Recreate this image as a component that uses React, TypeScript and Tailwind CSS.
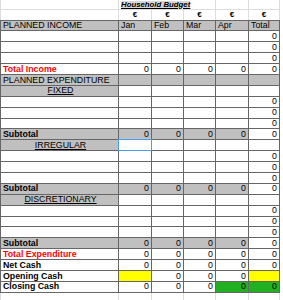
import React from 'react';

type Cell = { v?: string; bg?: string; selected?: boolean };
type Row = {
  label: string;
  labelBg?: string;
  labelClass?: string;
  cells: Cell[];
  cellClass?: string;
};

const GRAY = 'bg-[#c0c0c0]';
const YELLOW = 'bg-[#ffff00]';
const GREEN = 'bg-[#22b022]';
const COLS = 'grid-cols-[117px_32px_31px_31px_32px_30px]';

const blank = (): Row => ({
  label: '',
  cells: [{}, {}, {}, {}, { v: '0' }],
});

const section = (label: string, selected = false): Row => ({
  label,
  labelBg: GRAY,
  labelClass: 'justify-center underline underline-offset-1',
  cells: [{ selected }, {}, {}, {}, {}],
});

const subtotal = (): Row => ({
  label: 'Subtotal',
  labelBg: GRAY,
  labelClass: 'font-bold',
  cells: [
    { v: '0', bg: GRAY },
    { v: '0', bg: GRAY },
    { v: '0', bg: GRAY },
    { v: '0', bg: GRAY },
    { v: '0' },
  ],
});

const allZero = (label: string, labelClass: string): Row => ({
  label,
  labelClass,
  cells: [{ v: '0' }, { v: '0' }, { v: '0' }, { v: '0' }, { v: '0' }],
});

const rows: Row[] = [
  {
    label: 'PLANNED INCOME',
    labelBg: GRAY,
    cells: ['Jan', 'Feb', 'Mar', 'Apr', 'Total'].map((v) => ({ v, bg: GRAY })),
    cellClass: 'justify-start pl-[2px]',
  },
  blank(),
  blank(),
  blank(),
  allZero('Total Income', 'font-bold text-[#ff0000]'),
  {
    label: 'PLANNED EXPENDITURE',
    labelBg: GRAY,
    cells: [{ bg: GRAY }, { bg: GRAY }, { bg: GRAY }, { bg: GRAY }, { bg: GRAY }],
  },
  section('FIXED'),
  blank(),
  blank(),
  blank(),
  subtotal(),
  section('IRREGULAR', true),
  blank(),
  blank(),
  blank(),
  subtotal(),
  section('DISCRETIONARY'),
  blank(),
  blank(),
  blank(),
  subtotal(),
  allZero('Total Expenditure', 'font-bold text-[#ff0000]'),
  allZero('Net Cash', 'font-bold'),
  {
    label: 'Opening Cash',
    labelClass: 'font-bold',
    cells: [{ bg: YELLOW }, { v: '0' }, { v: '0' }, { v: '0' }, { bg: YELLOW }],
  },
  {
    label: 'Closing Cash',
    labelClass: 'font-bold',
    cells: [{ v: '0' }, { v: '0' }, { v: '0' }, { v: '0', bg: GREEN }, { v: '0', bg: GREEN }],
  },
];

export default function App() {
  return (
    <div className="h-[300px] w-[283px] overflow-hidden bg-white font-[family-name:Liberation_Sans,Arial,sans-serif] text-[8.8px] leading-none text-black">
      {/* title + currency rows, faint sheet gridlines */}
      <div className={`grid w-fit ${COLS} grid-rows-[9px_9.5px] gap-px bg-[#dcdcdc] px-px`}>
        <div className="bg-white" />
        <div className="col-span-3 flex items-center bg-white pl-[2px]">
          <span className="bg-[#d6d6d6] text-[7.8px] font-bold italic underline underline-offset-1">
            Household Budget
          </span>
        </div>
        <div className="bg-white" />
        <div className="bg-white" />
        <div className="bg-white" />
        {[0, 1, 2, 3, 4].map((i) => (
          <div key={i} className="flex items-center justify-center bg-white text-[8px] font-bold">
            €
          </div>
        ))}
      </div>

      {/* budget table */}
      <div className={`grid w-fit ${COLS} auto-rows-[9.9px] gap-px bg-[#666666] p-px`}>
        {rows.map((row, r) => (
          <React.Fragment key={r}>
            <div
              className={`flex items-center whitespace-nowrap pl-[2px] ${row.labelBg ?? 'bg-white'} ${row.labelClass ?? ''}`}
            >
              {row.label}
            </div>
            {row.cells.map((c, i) => (
              <div
                key={i}
                className={`relative flex items-center pr-[2px] ${row.cellClass ?? 'justify-end'} ${c.bg ?? 'bg-white'} ${
                  c.selected ? 'z-10' : ''
                }`}
              >
                {c.v}
                {c.selected && <span className="absolute -inset-px border border-[#4a9be8]" />}
              </div>
            ))}
          </React.Fragment>
        ))}
      </div>

      {/* empty sheet row below */}
      <div className={`grid w-fit ${COLS} grid-rows-[10px] gap-px bg-[#dcdcdc] px-px pb-px`}>
        {[0, 1, 2, 3, 4, 5].map((i) => (
          <div key={i} className="bg-white" />
        ))}
      </div>
    </div>
  );
}
